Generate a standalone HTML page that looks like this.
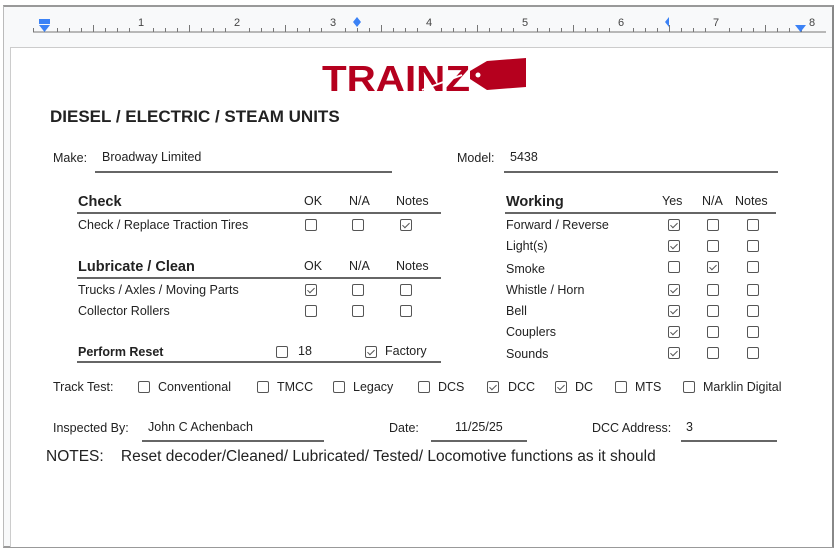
<!DOCTYPE html>
<html><head><meta charset="utf-8"><style>
*{margin:0;padding:0;box-sizing:border-box}
body{width:838px;height:551px;background:#fff;position:relative;overflow:hidden;font-family:"Liberation Sans",sans-serif;color:#222;font-size:12.5px}
.frame{position:absolute;left:3px;top:5px;width:831px;height:543px;background:#f8f9fa;border-top:2px solid #999;border-left:1px solid #bbb;border-right:2px solid #888;border-bottom:2px solid #999}
.page{position:absolute;left:10px;top:47px;width:822px;height:500px;background:#fff;border-top:1px solid #ccc;border-left:1px solid #ccc}
.t{position:absolute;line-height:16px;white-space:nowrap}
.b{font-weight:bold;font-size:15px}
.ln{position:absolute;height:2px;background:#666}
.cb{position:absolute;width:12px;height:12px;border:1px solid #555;border-radius:2px;background:#fff}
.cb.c::after{content:"";position:absolute;left:3px;top:1px;width:3px;height:6px;border:solid #555;border-width:0 1px 1px 0;transform:rotate(45deg)}
.rn{position:absolute;top:17px;font-size:11px;color:#444}
</style></head><body>
<div class="frame"></div>
<svg style="position:absolute;left:0;top:0" width="838" height="47">
<line x1="33" y1="32" x2="826" y2="32" stroke="#777" stroke-width="1"/>
<g stroke="#777" stroke-width="1" id="ticks"></g>
<rect x="39" y="19" width="11" height="5" fill="#3b82f6"/>
<path d="M39 25 L50 25 L44.5 32Z" fill="#3b82f6"/>
<path d="M357 17 L361 22 L357 27 L353 22Z" fill="#3b82f6"/>
<path d="M669 17 L665 22 L669 27Z" fill="#3b82f6"/>
<path d="M795 25 L806 25 L800.5 32Z" fill="#3b82f6"/>
</svg>
<div class="rn" style="left:138px">1</div><div class="rn" style="left:234px">2</div><div class="rn" style="left:330px">3</div><div class="rn" style="left:426px">4</div><div class="rn" style="left:522px">5</div><div class="rn" style="left:618px">6</div><div class="rn" style="left:713px">7</div><div class="rn" style="left:809px">8</div>
<div class="page"></div>
<svg style="position:absolute;left:322px;top:57px" width="206" height="38">
<text x="0" y="34" font-family="Liberation Sans" font-weight="bold" font-size="36" fill="#b5001e" textLength="148" lengthAdjust="spacingAndGlyphs">TRAINZ</text>
<path d="M148 14 L165 4 L204 1 L204 30 L165 33 L148 22Z" fill="#b5001e"/>
<circle cx="156" cy="18" r="2.5" fill="#fff"/>
<path d="M100 33 L140 18" stroke="#fff" stroke-width="2"/>
</svg>
<div class="t b" style="left:50px;top:109px;font-size:17px">DIESEL / ELECTRIC / STEAM UNITS</div>
<div class="t" style="left:53px;top:150px">Make:</div>
<div class="t" style="left:102px;top:149px">Broadway Limited</div>
<div class="ln" style="left:95px;top:171px;width:297px"></div>
<div class="t" style="left:457px;top:150px">Model:</div>
<div class="t" style="left:510px;top:149px">5438</div>
<div class="ln" style="left:504px;top:171px;width:274px"></div>

<div class="t b" style="left:78px;top:194px;font-size:14.5px">Check</div>
<div class="t" style="left:304px;top:193px">OK</div><div class="t" style="left:349px;top:193px">N/A</div><div class="t" style="left:396px;top:193px">Notes</div>
<div class="ln" style="left:77px;top:212px;width:364px"></div>
<div class="t" style="left:78px;top:217px">Check / Replace Traction Tires</div>
<div class="cb" style="left:305px;top:219px"></div><div class="cb" style="left:352px;top:219px"></div><div class="cb c" style="left:400px;top:219px"></div>

<div class="t b" style="left:78px;top:259px;font-size:14.5px">Lubricate / Clean</div>
<div class="t" style="left:304px;top:258px">OK</div><div class="t" style="left:349px;top:258px">N/A</div><div class="t" style="left:396px;top:258px">Notes</div>
<div class="ln" style="left:77px;top:277px;width:364px"></div>
<div class="t" style="left:78px;top:282px">Trucks / Axles / Moving Parts</div>
<div class="cb c" style="left:305px;top:284px"></div><div class="cb" style="left:352px;top:284px"></div><div class="cb" style="left:400px;top:284px"></div>
<div class="t" style="left:78px;top:303px">Collector Rollers</div>
<div class="cb" style="left:305px;top:305px"></div><div class="cb" style="left:352px;top:305px"></div><div class="cb" style="left:400px;top:305px"></div>

<div class="t" style="left:78px;top:344px;font-weight:bold">Perform Reset</div>
<div class="cb" style="left:276px;top:346px"></div><div class="t" style="left:298px;top:343px">18</div>
<div class="cb c" style="left:365px;top:346px"></div><div class="t" style="left:385px;top:343px">Factory</div>
<div class="ln" style="left:77px;top:361px;width:364px"></div>

<div class="t b" style="left:506px;top:194px;font-size:14.5px">Working</div>
<div class="t" style="left:662px;top:193px">Yes</div><div class="t" style="left:702px;top:193px">N/A</div><div class="t" style="left:735px;top:193px">Notes</div>
<div class="ln" style="left:505px;top:212px;width:271px"></div>
<div class="t" style="left:506px;top:217px">Forward / Reverse</div>
<div class="t" style="left:506px;top:238px">Light(s)</div>
<div class="t" style="left:506px;top:261px">Smoke</div>
<div class="t" style="left:506px;top:282px">Whistle / Horn</div>
<div class="t" style="left:506px;top:303px">Bell</div>
<div class="t" style="left:506px;top:324px">Couplers</div>
<div class="t" style="left:506px;top:346px">Sounds</div>
<div class="cb c" style="left:668px;top:219px"></div><div class="cb" style="left:707px;top:219px"></div><div class="cb" style="left:747px;top:219px"></div>
<div class="cb c" style="left:668px;top:240px"></div><div class="cb" style="left:707px;top:240px"></div><div class="cb" style="left:747px;top:240px"></div>
<div class="cb" style="left:668px;top:261px"></div><div class="cb c" style="left:707px;top:261px"></div><div class="cb" style="left:747px;top:261px"></div>
<div class="cb c" style="left:668px;top:284px"></div><div class="cb" style="left:707px;top:284px"></div><div class="cb" style="left:747px;top:284px"></div>
<div class="cb c" style="left:668px;top:305px"></div><div class="cb" style="left:707px;top:305px"></div><div class="cb" style="left:747px;top:305px"></div>
<div class="cb c" style="left:668px;top:326px"></div><div class="cb" style="left:707px;top:326px"></div><div class="cb" style="left:747px;top:326px"></div>
<div class="cb c" style="left:668px;top:347px"></div><div class="cb" style="left:707px;top:347px"></div><div class="cb" style="left:747px;top:347px"></div>

<div class="t" style="left:53px;top:379px">Track Test:</div>
<div class="cb" style="left:138px;top:381px"></div><div class="t" style="left:158px;top:379px">Conventional</div>
<div class="cb" style="left:257px;top:381px"></div><div class="t" style="left:277px;top:379px">TMCC</div>
<div class="cb" style="left:333px;top:381px"></div><div class="t" style="left:353px;top:379px">Legacy</div>
<div class="cb" style="left:418px;top:381px"></div><div class="t" style="left:438px;top:379px">DCS</div>
<div class="cb c" style="left:487px;top:381px"></div><div class="t" style="left:508px;top:379px">DCC</div>
<div class="cb c" style="left:555px;top:381px"></div><div class="t" style="left:575px;top:379px">DC</div>
<div class="cb" style="left:615px;top:381px"></div><div class="t" style="left:635px;top:379px">MTS</div>
<div class="cb" style="left:683px;top:381px"></div><div class="t" style="left:703px;top:379px">Marklin Digital</div>

<div class="t" style="left:53px;top:420px">Inspected By:</div>
<div class="t" style="left:148px;top:419px">John C Achenbach</div>
<div class="ln" style="left:142px;top:440px;width:182px"></div>
<div class="t" style="left:389px;top:420px">Date:</div>
<div class="t" style="left:455px;top:419px">11/25/25</div>
<div class="ln" style="left:431px;top:440px;width:96px"></div>
<div class="t" style="left:592px;top:420px">DCC Address:</div>
<div class="t" style="left:686px;top:419px">3</div>
<div class="ln" style="left:681px;top:440px;width:96px"></div>
<div class="t" style="left:46px;top:449px;font-size:15.5px">NOTES:&nbsp;&nbsp;&nbsp; Reset decoder/Cleaned/ Lubricated/ Tested/ Locomotive functions as it should</div>
<script>
var g=document.getElementById('ticks'),s='';
for(var i=-1;i<=63;i++){var x=45+i*12;if(x<33||x>826)continue;var h=(i%8==0)?0:(i%4==0?7:4);if(h)s+='<line x1="'+(x+.5)+'" y1="'+(32-h)+'" x2="'+(x+.5)+'" y2="32"/>';}
g.innerHTML=s;
</script>
</body></html>
